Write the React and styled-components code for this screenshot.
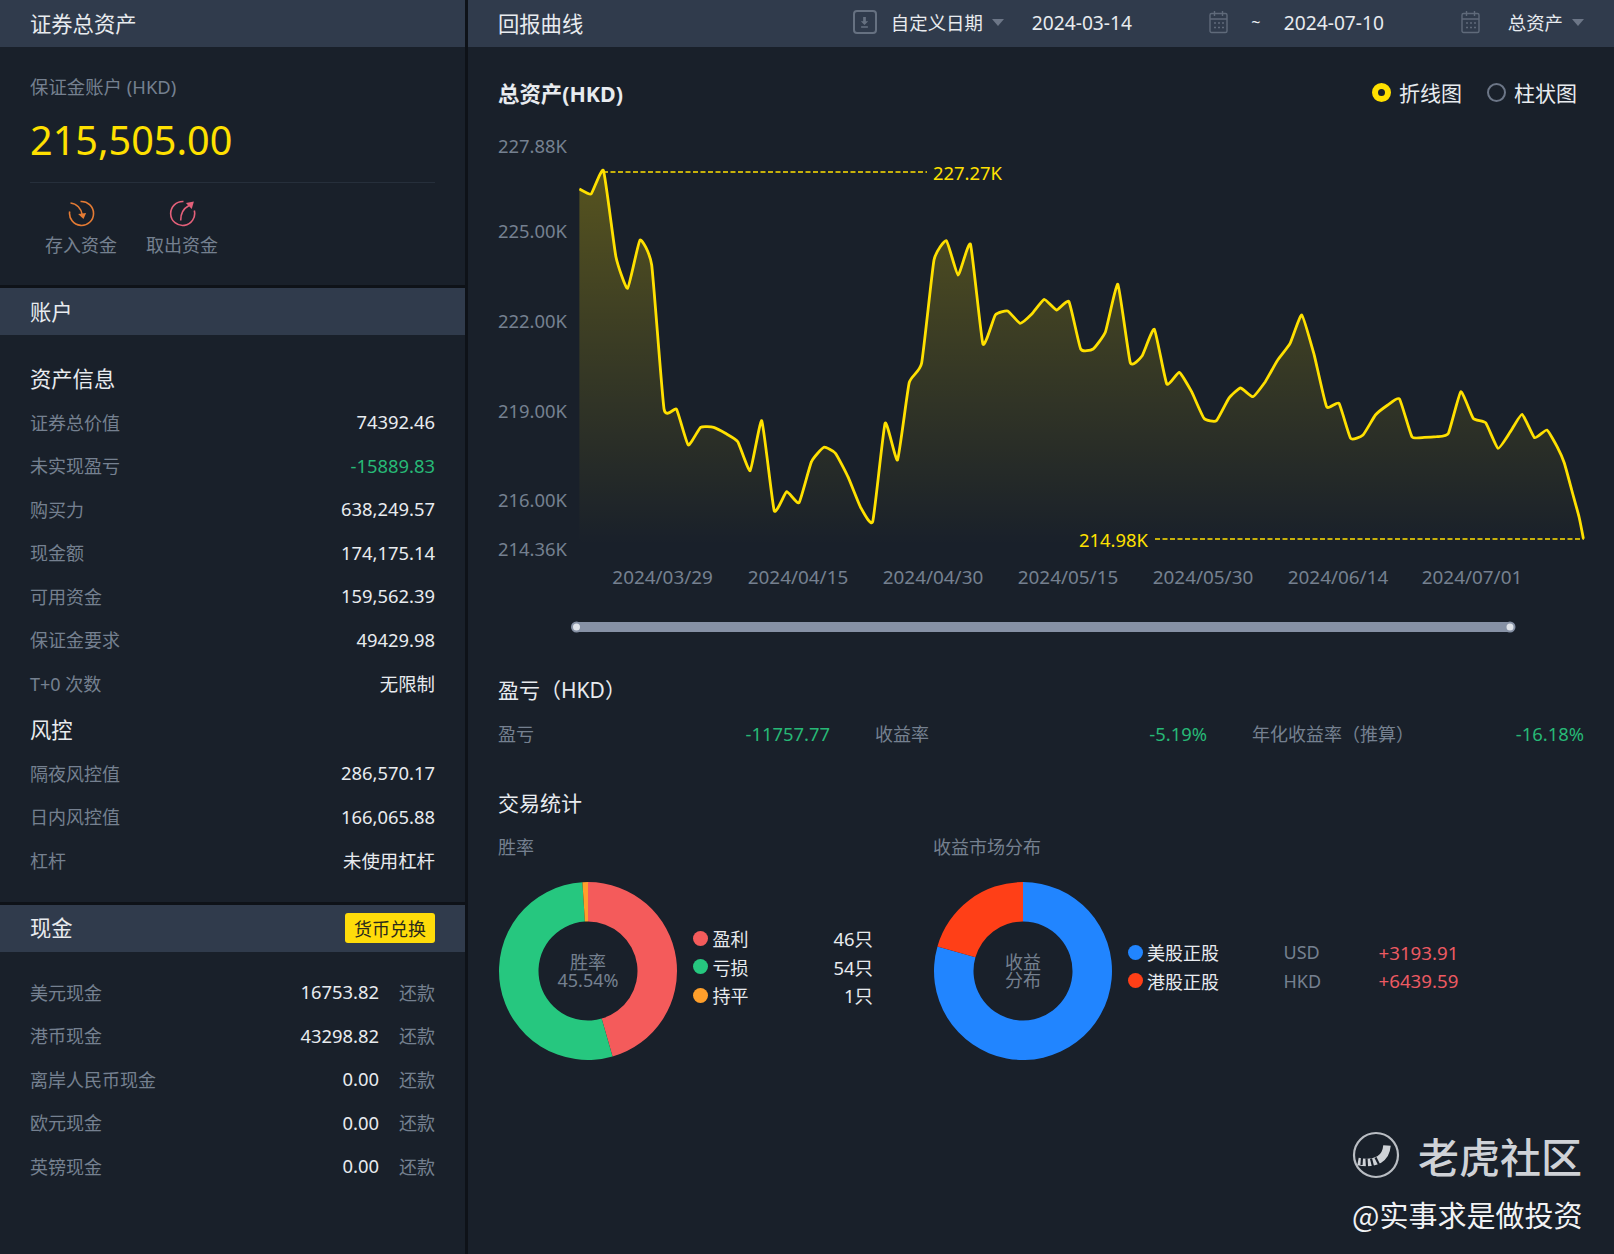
import React from 'react';
import styled, { createGlobalStyle } from 'styled-components';

const GlobalStyle = createGlobalStyle`
  html, body {
    margin: 0;
    padding: 0;
    background: #19202a;
  }
  body {
    font-family: "Noto Sans", "Noto Sans CJK SC", sans-serif;
    color: #e8ebef;
  }
  * {
    box-sizing: border-box;
  }
`;

const colors = {
  header: '#303b4c',
  panel: '#19202a',
  line: '#0e1218',
  muted: '#758090',
  text: '#e8ebef',
  yellow: '#ffe000',
  green: '#27b876',
  red: '#ec5a62',
};

const Page = styled.div`
  position: relative;
  display: grid;
  grid-template-columns: 465px 1fr;
  column-gap: 3px;
  width: 1614px;
  height: 1254px;
  overflow: hidden;
  background: ${colors.line};
`;

const LeftColumn = styled.aside`
  display: flex;
  flex-direction: column;
  gap: 3px;
  background: ${colors.line};
`;

const Section = styled.section`
  background: ${colors.panel};
  flex: ${props => (props.$grow ? 1 : 'none')};
`;

const BarHeader = styled.header`
  display: flex;
  align-items: center;
  justify-content: space-between;
  height: 47px;
  padding: 0 30px 3px;
  background: ${colors.header};
  font-size: 21.3px;
  color: ${colors.text};
`;

const SummaryBody = styled.div`
  height: 238px;
  padding: 26px 30px 0;
`;

const AccountLabel = styled.div`
  height: 28px;
  line-height: 28px;
  font-size: 18.4px;
  color: ${colors.muted};
`;

const AccountValue = styled.div`
  height: 56px;
  margin-top: 11px;
  line-height: 56px;
  font-size: 39.6px;
  color: ${colors.yellow};
`;

const ThinRule = styled.div`
  height: 1px;
  margin-top: 14px;
  background: #262f3b;
`;

const FundActions = styled.div`
  display: flex;
  gap: 29px;
  padding-left: 15px;
  margin-top: 17px;
`;

const FundAction = styled.div`
  display: flex;
  flex-direction: column;
  align-items: center;
  width: 72px;
  font-size: 18px;
  line-height: 26px;
  color: ${colors.muted};

  svg {
    display: block;
    margin-bottom: 5px;
  }
`;

const InfoBody = styled.div`
  padding: ${props => props.$top}px 30px ${props => props.$bottom}px;
`;

const GroupTitle = styled.h3`
  margin: ${props => props.$gap || 0}px 0 0;
  height: 43.5px;
  line-height: 43.5px;
  font-size: 21.3px;
  font-weight: 400;
  color: ${colors.text};
`;

const InfoRow = styled.div`
  display: flex;
  align-items: center;
  justify-content: space-between;
  height: 43.5px;
  font-size: 18px;
`;

const RowLabel = styled.span`
  color: ${colors.muted};
`;

const RowValue = styled.span`
  font-size: 18.4px;
  color: ${props => props.$color || colors.text};
`;

const CashValue = styled.span`
  display: flex;
  align-items: center;
  gap: 20px;
  font-size: 18.4px;
  color: ${colors.text};
`;

const Repay = styled.span`
  font-size: 18px;
  color: ${colors.muted};
`;

const ExchangeButton = styled.button`
  width: 90px;
  height: 30px;
  padding: 0;
  margin-top: 3px;
  border: none;
  border-radius: 3px;
  background: #ffdc0a;
  font: inherit;
  font-size: 18px;
  color: #2a2a1c;
`;

const RightColumn = styled.main`
  background: ${colors.panel};
`;

const Controls = styled.div`
  display: flex;
  align-items: center;
  font-size: 18.4px;
`;

const DownloadBox = styled.span`
  display: flex;
  align-items: center;
  justify-content: center;
  width: 24px;
  height: 24px;
  margin-right: 14px;
  border: 2px solid #667181;
  border-radius: 4px;
`;

const Caret = styled.i`
  display: block;
  width: 0;
  height: 0;
  margin-left: 9px;
  border-left: 6px solid transparent;
  border-right: 6px solid transparent;
  border-top: 7px solid #6c7687;
`;

const DateField = styled.div`
  display: flex;
  align-items: center;
  justify-content: space-between;
  width: 196px;
  margin-left: ${props => props.$gap || 0}px;
  font-size: 19.2px;
`;

const Tilde = styled.span`
  width: 56px;
  text-align: center;
  font-size: 16px;
`;

const SelectField = styled.div`
  display: flex;
  align-items: center;
  margin-left: 28px;
`;

const ChartBody = styled.div`
  padding: 26px 30px 0;
`;

const ChartTitleRow = styled.div`
  display: flex;
  align-items: center;
  justify-content: space-between;
  height: 40px;
  padding-bottom: 2px;
`;

const ChartTitle = styled.h2`
  margin: 0;
  font-size: 21.4px;
  font-weight: 700;
  color: ${colors.text};
`;

const RadioGroup = styled.div`
  display: flex;
  gap: 25px;
  margin-right: 7px;
  font-size: 21px;
`;

const RadioOption = styled.label`
  display: flex;
  align-items: center;
  gap: 8px;
`;

const RadioDot = styled.span`
  width: 19px;
  height: 19px;
  border-radius: 50%;
  border: ${props => (props.$on ? `6px solid ${colors.yellow}` : '2px solid #6c7687')};
`;

const ChartSvg = styled.svg`
  display: block;
  width: 1086px;
  height: 530px;
  margin-top: 7px;
  overflow: visible;
  font-family: "Noto Sans", "Noto Sans CJK SC", sans-serif;
  font-size: 18.4px;
`;

const BlockTitle = styled.h3`
  margin: ${props => props.$gap}px 0 0;
  height: 30px;
  line-height: 30px;
  font-size: 21px;
  font-weight: 400;
  color: ${colors.text};
`;

const MetricGrid = styled.div`
  display: grid;
  grid-template-columns: repeat(3, 332px);
  column-gap: 45px;
  margin-top: 17px;
  font-size: 18px;
  line-height: 24px;
`;

const Metric = styled.div`
  display: flex;
  justify-content: space-between;
`;

const StatGrid = styled.div`
  display: grid;
  grid-template-columns: 435px 1fr;
  margin-top: 18px;
`;

const StatLabel = styled.div`
  height: 24px;
  line-height: 24px;
  margin-top: -1px;
  font-size: 18px;
  color: ${colors.muted};
`;

const DonutRow = styled.div`
  display: flex;
  margin-top: 23px;
`;

const DonutBox = styled.div`
  position: relative;
  width: 180px;
  height: 178px;

  svg {
    display: block;
  }
`;

const DonutCaption = styled.div`
  position: absolute;
  inset: 0;
  display: flex;
  flex-direction: column;
  align-items: center;
  justify-content: center;
  font-size: 18px;
  line-height: 18px;
  color: ${colors.muted};
`;

const Legend = styled.div`
  align-self: center;
  width: ${props => props.$width}px;
  margin: 0 0 9px 15px;
  font-size: 18px;
`;

const LegendRow = styled.div`
  display: grid;
  grid-template-columns: ${props => props.$columns};
  align-items: center;
  height: 28.5px;
`;

const LegendDot = styled.i`
  display: block;
  width: 15px;
  height: 15px;
  border-radius: 50%;
  background: ${props => props.$color};
`;

const LegendValue = styled.span`
  text-align: right;
  font-size: 18.4px;
`;

const LegendCurrency = styled.span`
  color: ${colors.muted};
`;

const LegendProfit = styled.span`
  font-size: 18.7px;
  color: ${colors.red};
`;

const Watermark = styled.div`
  position: absolute;
  right: 32px;
  bottom: 20px;
  width: 230px;
  font-family: "Noto Sans CJK SC", "Noto Sans", sans-serif;
`;

const BrandRow = styled.div`
  display: flex;
  align-items: center;
  justify-content: space-between;
  height: 50px;
  font-size: 41px;
  font-weight: 500;
  color: #cfd2d7;
`;

const Handle = styled.div`
  margin-top: 14px;
  white-space: nowrap;
  line-height: 40px;
  font-size: 29px;
  color: #f1f2f4;
`;

const assetRows = [
  ['证券总价值', '74392.46'],
  ['未实现盈亏', '-15889.83', colors.green],
  ['购买力', '638,249.57'],
  ['现金额', '174,175.14'],
  ['可用资金', '159,562.39'],
  ['保证金要求', '49429.98'],
  ['T+0 次数', '无限制'],
];

const riskRows = [
  ['隔夜风控值', '286,570.17'],
  ['日内风控值', '166,065.88'],
  ['杠杆', '未使用杠杆'],
];

const cashRows = [
  ['美元现金', '16753.82'],
  ['港币现金', '43298.82'],
  ['离岸人民币现金', '0.00'],
  ['欧元现金', '0.00'],
  ['英镑现金', '0.00'],
];

// traced from the curve: x/y in a 1.37x / 3x frame anchored at (470, 300)
const traced = [
  [150, -333], [166, -318], [183, -388], [200, -130], [216, -35], [233, -180], [249, -105],
  [266, 328], [283, 328], [299, 435], [316, 382], [334, 382], [350, 400], [367, 425],
  [384, 512], [400, 362], [417, 632], [434, 575], [451, 608], [468, 485], [485, 442],
  [501, 460], [518, 530], [535, 620], [552, 665], [569, 370], [586, 480], [602, 248],
  [619, 190], [636, -120], [653, -178], [669, -75], [686, -167], [703, 132], [720, 45],
  [737, 33], [754, 70], [770, 42], [787, -2], [804, 30], [821, 5], [837, 147], [854, 147],
  [871, 95], [888, -47], [905, 188], [921, 168], [938, 88], [955, 252], [972, 217],
  [989, 275], [1006, 355], [1023, 362], [1040, 295], [1056, 264], [1073, 290], [1090, 245],
  [1107, 180], [1124, 130], [1140, 45], [1157, 165], [1174, 320], [1191, 310], [1207, 415],
  [1224, 405], [1241, 345], [1258, 315], [1274, 297], [1291, 410], [1308, 412], [1325, 410],
  [1341, 400], [1358, 275], [1375, 355], [1392, 368], [1409, 445], [1426, 395], [1442, 343],
  [1459, 413], [1476, 390], [1490, 440], [1500, 490], [1510, 570], [1520, 650], [1526, 716],
];

const curve = traced.map(([x, y]) => [470 + x / 1.3706, 300 + y / 3]);

const buildLine = points => {
  const f = n => n.toFixed(1);
  let d = `M${f(points[0][0])} ${f(points[0][1])}`;
  for (let i = 0; i < points.length - 1; i++) {
    const p0 = points[i - 1] || points[i];
    const p1 = points[i];
    const p2 = points[i + 1];
    const p3 = points[i + 2] || p2;
    const k = 0.07;
    d += `C${f(p1[0] + (p2[0] - p0[0]) * k)} ${f(p1[1] + (p2[1] - p0[1]) * k)} ${f(p2[0] - (p3[0] - p1[0]) * k)} ${f(p2[1] - (p3[1] - p1[1]) * k)} ${f(p2[0])} ${f(p2[1])}`;
  }
  return d;
};

const linePath = buildLine(curve);
const areaPath = `${linePath}L${curve[curve.length - 1][0].toFixed(1)} 548L${curve[0][0].toFixed(1)} 548Z`;

const yTicks = [
  ['227.88K', 145],
  ['225.00K', 230],
  ['222.00K', 320],
  ['219.00K', 410],
  ['216.00K', 499],
  ['214.36K', 548],
];

const xTicks = [
  ['2024/03/29', 662.6],
  ['2024/04/15', 798],
  ['2024/04/30', 933],
  ['2024/05/15', 1068],
  ['2024/05/30', 1203],
  ['2024/06/14', 1338],
  ['2024/07/01', 1472],
];

function polar(r, deg) {
  const a = ((deg - 90) * Math.PI) / 180;
  return [90 + r * Math.cos(a), 89 + r * Math.sin(a)];
}

function sectorPath(from, to) {
  const [ox1, oy1] = polar(89, from);
  const [ox2, oy2] = polar(89, to);
  const [ix1, iy1] = polar(49.5, to);
  const [ix2, iy2] = polar(49.5, from);
  const large = to - from > 180 ? 1 : 0;
  return `M${ox1} ${oy1}A89 89 0 ${large} 1 ${ox2} ${oy2}L${ix1} ${iy1}A49.5 49.5 0 ${large} 0 ${ix2} ${iy2}Z`;
}

function Donut({ slices, children }) {
  return (
    <DonutBox>
      <svg width="180" height="178" viewBox="0 0 180 178">
        {slices.map(s => (
          <path key={s.color} d={sectorPath(s.from, s.to)} fill={s.color} />
        ))}
      </svg>
      <DonutCaption>{children}</DonutCaption>
    </DonutBox>
  );
}

const DepositIcon = () => (
  <svg width="27" height="27" viewBox="-13.5 -13.5 27 27" fill="none" stroke="#e47b34" strokeWidth="1.6">
    <path d="M-1 -12A12 12 0 1 1 -11.8 -2" />
    <path d="M-11 -10.5C-5 -10 0 -5 0.8 1.5" />
    <path d="M-3.4 0.6L4.6 -0.6L2 5.4Z" fill="#e47b34" stroke="none" />
  </svg>
);

const WithdrawIcon = () => (
  <svg width="27" height="27" viewBox="-13.5 -13.5 27 27" fill="none" stroke="#e4607a" strokeWidth="1.6">
    <path d="M1 -12A12 12 0 1 0 11.8 -3" />
    <path d="M-1.8 7C-2 0 1 -5 6.5 -8" />
    <path d="M3.4 -10.4L11.4 -12L9.2 -4.6Z" fill="#e4607a" stroke="none" />
  </svg>
);

const CalendarIcon = () => (
  <svg width="19" height="24" viewBox="0 0 19 24" fill="none" stroke="#5f6a7a" strokeWidth="1.4">
    <rect x="1" y="3.5" width="17" height="19" rx="1.5" />
    <path d="M1 9H18M5.5 1V6M13.5 1V6" />
    <path d="M5 13H7M9 13H11M13 13H15M5 17.5H7M9 17.5H11M13 17.5H15" strokeWidth="1.6" />
  </svg>
);

const DownloadIcon = () => (
  <svg width="9" height="11" viewBox="0 0 10 13" fill="#667181">
    <path d="M3.4 0H6.6V5H9.4L5 9.4L0.6 5H3.4ZM1 11H9V12.6H1Z" />
  </svg>
);

const TigerLogo = () => (
  <svg width="48" height="48" viewBox="-24 -24 48 48" fill="none">
    <circle r="22" stroke="#b9bdc3" strokeWidth="2.2" />
    <path d="M11 -9.5C10 3 1 10 -18 6.5" stroke="#cfd2d7" strokeWidth="7.5" />
    <path d="M-14 2.5L-14.5 10M-9.5 3.5L-9 12M-5 3.5L-3 11.5M-0.5 2.5L3 9.5" stroke="#19202a" strokeWidth="2.2" />
  </svg>
);

function App() {
  return (
    <>
      <GlobalStyle />
      <Page>
        <LeftColumn>
          <Section>
            <BarHeader>证券总资产</BarHeader>
            <SummaryBody>
              <AccountLabel>保证金账户 (HKD)</AccountLabel>
              <AccountValue>215,505.00</AccountValue>
              <ThinRule />
              <FundActions>
                <FundAction>
                  <DepositIcon />
                  存入资金
                </FundAction>
                <FundAction>
                  <WithdrawIcon />
                  取出资金
                </FundAction>
              </FundActions>
            </SummaryBody>
          </Section>

          <Section>
            <BarHeader>账户</BarHeader>
            <InfoBody $top={21.5} $bottom={20}>
              <GroupTitle>资产信息</GroupTitle>
              {assetRows.map(([label, value, color]) => (
                <InfoRow key={label}>
                  <RowLabel>{label}</RowLabel>
                  <RowValue $color={color}>{value}</RowValue>
                </InfoRow>
              ))}
              <GroupTitle $gap={3}>风控</GroupTitle>
              {riskRows.map(([label, value]) => (
                <InfoRow key={label}>
                  <RowLabel>{label}</RowLabel>
                  <RowValue>{value}</RowValue>
                </InfoRow>
              ))}
            </InfoBody>
          </Section>

          <Section $grow>
            <BarHeader>
              现金
              <ExchangeButton>货币兑换</ExchangeButton>
            </BarHeader>
            <InfoBody $top={18.5} $bottom={0}>
              {cashRows.map(([label, value]) => (
                <InfoRow key={label}>
                  <RowLabel>{label}</RowLabel>
                  <CashValue>
                    {value}
                    <Repay>还款</Repay>
                  </CashValue>
                </InfoRow>
              ))}
            </InfoBody>
          </Section>
        </LeftColumn>

        <RightColumn>
          <BarHeader>
            回报曲线
            <Controls>
              <DownloadBox>
                <DownloadIcon />
              </DownloadBox>
              自定义日期
              <Caret />
              <DateField $gap={28}>
                2024-03-14
                <CalendarIcon />
              </DateField>
              <Tilde>~</Tilde>
              <DateField>
                2024-07-10
                <CalendarIcon />
              </DateField>
              <SelectField>
                总资产
                <Caret />
              </SelectField>
            </Controls>
          </BarHeader>

          <ChartBody>
            <ChartTitleRow>
              <ChartTitle>总资产(HKD)</ChartTitle>
              <RadioGroup>
                <RadioOption>
                  <RadioDot $on />
                  折线图
                </RadioOption>
                <RadioOption>
                  <RadioDot />
                  柱状图
                </RadioOption>
              </RadioGroup>
            </ChartTitleRow>

            <ChartSvg viewBox="498 120 1086 530">
              <defs>
                <linearGradient id="areaFade" x1="0" y1="171" x2="0" y2="545" gradientUnits="userSpaceOnUse">
                  <stop offset="0" stopColor="#ffe000" stopOpacity="0.27" />
                  <stop offset="1" stopColor="#ffe000" stopOpacity="0" />
                </linearGradient>
              </defs>
              {yTicks.map(([label, y]) => (
                <text key={label} x="498" y={y} dominantBaseline="central" fill={colors.muted}>
                  {label}
                </text>
              ))}
              {xTicks.map(([label, x]) => (
                <text key={label} x={x} y="577" textAnchor="middle" dominantBaseline="central" fontSize="18.9" fill={colors.muted}>
                  {label}
                </text>
              ))}
              <path d={areaPath} fill="url(#areaFade)" />
              <path d={linePath} fill="none" stroke={colors.yellow} strokeWidth="2.8" strokeLinejoin="round" />
              <path d="M603 172H927M1155 539H1584" stroke={colors.yellow} strokeWidth="1.6" strokeDasharray="5 2.5" />
              <text x="933" y="172" dominantBaseline="central" fill={colors.yellow}>227.27K</text>
              <text x="1079" y="539" dominantBaseline="central" fill={colors.yellow}>214.98K</text>
              <rect x="576" y="622" width="934" height="10" fill="#8691a5" />
              <circle cx="576.5" cy="627" r="4.5" fill="#dfe3e9" stroke="#8691a5" strokeWidth="2" />
              <circle cx="1510" cy="627" r="4.5" fill="#dfe3e9" stroke="#8691a5" strokeWidth="2" />
            </ChartSvg>

            <BlockTitle $gap={25}>盈亏（HKD）</BlockTitle>
            <MetricGrid>
              <Metric>
                <RowLabel>盈亏</RowLabel>
                <RowValue $color={colors.green}>-11757.77</RowValue>
              </Metric>
              <Metric>
                <RowLabel>收益率</RowLabel>
                <RowValue $color={colors.green}>-5.19%</RowValue>
              </Metric>
              <Metric>
                <RowLabel>年化收益率（推算）</RowLabel>
                <RowValue $color={colors.green}>-16.18%</RowValue>
              </Metric>
            </MetricGrid>

            <BlockTitle $gap={42}>交易统计</BlockTitle>
            <StatGrid>
              <div>
                <StatLabel>胜率</StatLabel>
                <DonutRow>
                  <Donut
                    slices={[
                      { color: '#f45b5b', from: 0, to: 164 },
                      { color: '#26c77f', from: 164, to: 356.4 },
                      { color: '#ff9f2b', from: 356.4, to: 360 },
                    ]}
                  >
                    <span>胜率</span>
                    <span>45.54%</span>
                  </Donut>
                  <Legend $width={180}>
                    <LegendRow $columns="19.5px 1fr auto">
                      <LegendDot $color="#f45b5b" />
                      <span>盈利</span>
                      <LegendValue>46只</LegendValue>
                    </LegendRow>
                    <LegendRow $columns="19.5px 1fr auto">
                      <LegendDot $color="#26c77f" />
                      <span>亏损</span>
                      <LegendValue>54只</LegendValue>
                    </LegendRow>
                    <LegendRow $columns="19.5px 1fr auto">
                      <LegendDot $color="#ff9f2b" />
                      <span>持平</span>
                      <LegendValue>1只</LegendValue>
                    </LegendRow>
                  </Legend>
                </DonutRow>
              </div>
              <div>
                <StatLabel>收益市场分布</StatLabel>
                <DonutRow>
                  <Donut
                    slices={[
                      { color: '#2185ff', from: 0, to: 286 },
                      { color: '#ff3f17', from: 286, to: 360 },
                    ]}
                  >
                    <span>收益</span>
                    <span>分布</span>
                  </Donut>
                  <Legend $width={340}>
                    <LegendRow $columns="19px 136.5px 95px auto">
                      <LegendDot $color="#2185ff" />
                      <span>美股正股</span>
                      <LegendCurrency>USD</LegendCurrency>
                      <LegendProfit>+3193.91</LegendProfit>
                    </LegendRow>
                    <LegendRow $columns="19px 136.5px 95px auto">
                      <LegendDot $color="#ff3f17" />
                      <span>港股正股</span>
                      <LegendCurrency>HKD</LegendCurrency>
                      <LegendProfit>+6439.59</LegendProfit>
                    </LegendRow>
                  </Legend>
                </DonutRow>
              </div>
            </StatGrid>
          </ChartBody>
        </RightColumn>

        <Watermark>
          <BrandRow>
            <TigerLogo />
            老虎社区
          </BrandRow>
          <Handle>@实事求是做投资</Handle>
        </Watermark>
      </Page>
    </>
  );
}

export default App;
